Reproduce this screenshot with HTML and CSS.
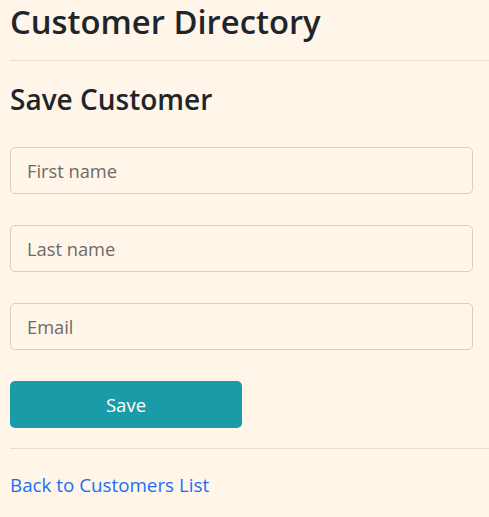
FILE: index.html
```html
<!DOCTYPE html>
<html lang="en">
<head>
<meta charset="utf-8">
<title>Customer Directory</title>
<link rel="stylesheet" href="styles.css">
</head>
<body>
<div class="page">
  <h1 class="title">Customer Directory</h1>
  <hr class="rule rule-top">
  <h2 class="subtitle">Save Customer</h2>
  <form class="form">
    <input class="field" type="text" placeholder="First name">
    <input class="field" type="text" placeholder="Last name">
    <input class="field" type="email" placeholder="Email">
    <button class="btn-save" type="button">Save</button>
  </form>
  <hr class="rule rule-bottom">
  <a class="back-link" href="#">Back to Customers List</a>
</div>
</body>
</html>
```

FILE: styles.css
```css
html, body {
  margin: 0;
  padding: 0;
  background: #fff6e9;
}
body {
  font-family: "Open Sans", "Noto Sans", sans-serif;
  color: #212529;
}
.page {
  display: flex;
  flex-direction: column;
  align-items: flex-start;
  padding-left: 10px;
}
.title {
  margin: 0;
  font-size: 32.8px;
  line-height: 44px;
  font-weight: 600;
}
.rule {
  align-self: stretch;
  border: 0;
  border-top: 1px solid #e8ddd0;
  margin: 0;
}
.rule-top {
  margin-top: 16px;
}
.subtitle {
  margin: 22px 0 0;
  font-size: 28px;
  line-height: 32px;
  font-weight: 600;
}
.form {
  display: flex;
  flex-direction: column;
  align-items: flex-start;
  gap: 31px;
  margin-top: 32px;
}
.field {
  box-sizing: border-box;
  width: 463px;
  height: 47px;
  padding: 0 16px;
  border: 1px solid #d8cdbf;
  border-radius: 5px;
  background: #fff6e9;
  font-family: inherit;
  font-size: 18.3px;
  color: #212529;
}
.field::placeholder {
  color: #6e6a66;
}
.btn-save {
  box-sizing: border-box;
  width: 232px;
  height: 47px;
  border: 0;
  border-radius: 5px;
  background: #1a9ca8;
  color: #fff;
  font-family: inherit;
  font-size: 18.5px;
}
.rule-bottom {
  margin-top: 20px;
}
.back-link {
  margin-top: 24px;
  font-size: 18.8px;
  line-height: 24px;
  color: #1a6ef5;
  text-decoration: none;
}
```
